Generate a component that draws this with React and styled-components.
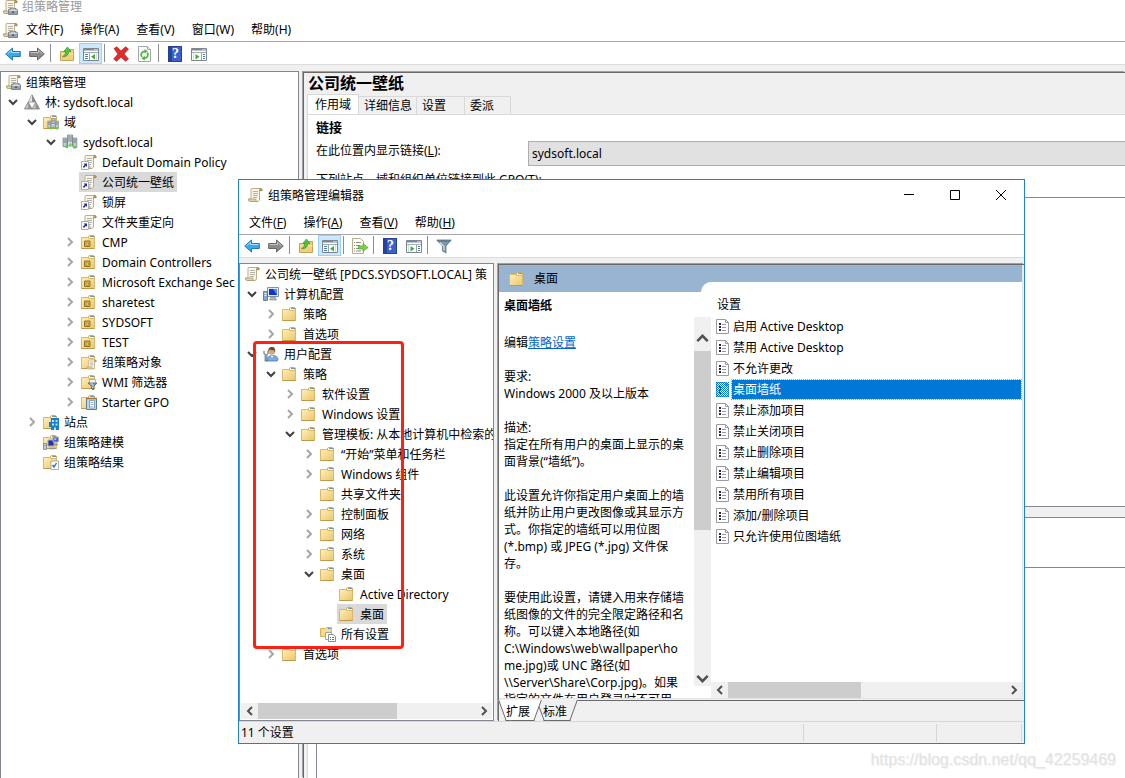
import styled, { createGlobalStyle, css } from "styled-components";

const GlobalStyle = createGlobalStyle`
  * {
    box-sizing: border-box;
  }
  body {
    margin: 0;
    overflow: hidden;
    background: #fff;
    color: #000;
    font-family: "Noto Sans", "Noto Sans CJK SC", sans-serif;
    font-size: 12px;
    line-height: 17px;
  }
  button,
  select {
    font: inherit;
    color: inherit;
  }
  button {
    padding: 0;
    border: 0;
    background: none;
  }
  svg {
    display: block;
    flex: none;
  }
  ul {
    margin: 0;
    padding: 0;
    list-style: none;
  }
`;

/* ---------- icons ---------- */

const Svg = ({ size = 16, children }) => (
  <svg width={size} height={size} viewBox="0 0 16 16" aria-hidden="true">
    {children}
  </svg>
);

const ScrollShape = () => (
  <>
    <path
      d="M4.5 1.5h9c1.2 0 1.8.8 1.6 2h-2.6v8.5c0 1.6-.8 2.5-2 2.5h-7c-1.4 0-2.2-.8-2-2.5h2.5V3c0-.8 0-1.5.5-1.5z"
      fill="#faf5e4"
      stroke="#bcae86"
    />
    <path d="M13 1.5c1.5-.3 2.3.8 2 2.2h-2.4z" fill="#c9a662" stroke="#8c7444" strokeWidth=".6" />
    <path d="M1.6 12h7.2c0 1.4.5 2.3 1.5 2.5H3.5C2 14.5 1.4 13.4 1.6 12z" fill="#e0d3ac" stroke="#a2936a" strokeWidth=".7" />
    <path d="M6 4.500h5M6 6.500h5M6 8.500h5M6 10.500h4" stroke="#b3b1aa" />
  </>
);

const ScrollIcon = () => (
  <Svg>
    <ScrollShape />
  </Svg>
);

const GpmIcon = () => (
  <Svg>
    <ScrollShape />
    <path d="M6.500 11l1.500-1.500h6l1.500 1.500v4.500h-9z" fill="#9aa4ae" stroke="#6b757f" strokeWidth=".8" />
    <path d="M7 11.500h8M9 10.200h4" stroke="#dfe5ea" strokeWidth=".8" />
    <path d="M10 12.500h2v1.500h-2z" fill="#4b545d" />
  </Svg>
);

const GpoLinkIcon = () => (
  <Svg>
    <ScrollShape />
    <path d="M.5 7.500h7v8h-7z" fill="#fff" stroke="#a9aeb5" />
    <path d="M2.500 9.500H6V13l-1.200-1.200L3 14l-1.200-1.200L3.800 10.800z" fill="#1f2f96" />
  </Svg>
);

const FolderShape = () => (
  <>
    <defs>
      <linearGradient id="folderFill" x1="0" y1="0" x2="1" y2="1">
        <stop offset="0" stopColor="#fff0b8" />
        <stop offset="1" stopColor="#eac56c" />
      </linearGradient>
    </defs>
    <path d="M7.500 4V2.200l1-.7h4l1 .7V5" fill="#fdf8e2" stroke="#d0ab58" />
    <path d="M9 2.500h3" stroke="#a9945a" />
    <path d="M11 2.500h2" stroke="#3d9be6" />
    <path d="M.5 3.500h6.300l1 1h5.700v10H.5z" fill="url(#folderFill)" stroke="#dcb864" />
    <path d="M.5 14.500h13" stroke="#bf9848" />
  </>
);

const FolderIcon = () => (
  <Svg>
    <FolderShape />
  </Svg>
);

const OuIcon = () => (
  <Svg>
    <FolderShape />
    <path d="M3.500 7h5.500v5.500H3.500z" fill="#d9b450" stroke="#94731f" />
    <path d="M5 9h2.500v2H5z" fill="#fbe7a2" stroke="#94731f" strokeWidth=".6" />
  </Svg>
);

const Servers = () => (
  <>
    <path d="M1 4h3.800v8.500H1zM11 4h3.800v9.500H11z" fill="#c4ccd3" stroke="#7a858f" strokeWidth=".8" />
    <path d="M5.500 1h5v11h-5z" fill="#d6dde3" stroke="#6d7882" strokeWidth=".8" />
    <path d="M1.500 6h2.800M1.500 8h2.800M11.500 6h2.800M11.500 8h2.800M6 3h4M6 5h4M6 7h4" stroke="#66717b" strokeWidth=".9" />
    <path d="M7.500 9.500h2V11h-2zM3.500 11.500H6V14H3.500zM11.500 12h2.500v2.500h-2.500z" fill="#3fe21d" />
  </>
);

const DomainsIcon = () => (
  <Svg>
    <FolderShape />
    <g transform="translate(4 4) scale(.78)">
      <Servers />
    </g>
  </Svg>
);

const DomainIcon = () => (
  <Svg>
    <Servers />
  </Svg>
);

const ForestIcon = () => (
  <Svg>
    <path d="M8 .8L15.500 15H.5z" fill="#c6c6c6" stroke="#777" strokeWidth=".8" />
    <path d="M8 1L4.300 8H8z" fill="#e4e4e4" />
    <path d="M8 1l3.700 7H8z" fill="#8d8d8d" />
    <path d="M4.300 8h7.400L8 15z" fill="#fafafa" stroke="#777" strokeWidth=".6" />
    <path d="M4.300 8v7H8zM11.700 8l3.600 7h-3.600z" fill="#8f8f8f" />
  </Svg>
);

const GpoFolderIcon = () => (
  <Svg>
    <FolderShape />
    <g transform="translate(5 5) scale(.68)">
      <ScrollShape />
    </g>
  </Svg>
);

const WmiIcon = () => (
  <Svg>
    <FolderShape />
    <path d="M8.500 5.500h6v4h-6z" fill="#f3f0e6" stroke="#a29c88" strokeWidth=".7" />
    <path d="M7 9h9l-3.200 3.500V16l-2.200-1v-2.500z" fill="#6f93ac" stroke="#3f617a" strokeWidth=".7" />
    <path d="M9 10h3v4" stroke="#c7dce9" fill="none" />
  </Svg>
);

const StarterIcon = () => (
  <Svg>
    <FolderShape />
    <path d="M5.500 4.500h10v11h-10z" fill="#bcd6ea" stroke="#5b7f9b" />
    <path d="M5 4.500h11" stroke="#a5713e" strokeWidth="1.500" />
    <path d="M8.500 6.500h5V14h-5z" fill="#fff" stroke="#6f93ac" strokeWidth=".8" />
    <path d="M9.500 8.500h3M9.500 10.500h3M9.500 12.500h2" stroke="#7f9bb1" strokeWidth=".8" />
  </Svg>
);

const SiteIcon = () => (
  <Svg>
    <FolderShape />
    <path d="M8 4h8v12H8v-3H6V8h2z" fill="#1b7cc9" />
    <path d="M9 6h2v2H9zM12.500 6h2v2h-2zM9 9.500h2v2H9zM12.500 9.500h2v2h-2zM11 13.500h2V16h-2z" fill="#b9e2ff" />
  </Svg>
);

const ModelingIcon = () => (
  <Svg>
    <FolderShape />
    <path d="M5 6h6v6H5z" fill="#2130b6" stroke="#a5abb3" />
    <path d="M10 3h5.500v5H10z" fill="#3a5be0" stroke="#b0b6be" />
    <path d="M11 4.500h3l-2 2z" fill="#d6e4ff" />
    <path d="M.5 9.500h3v6h-3z" fill="#c9cdd2" stroke="#7b828a" strokeWidth=".8" />
    <path d="M1.500 11h1v1h-1z" fill="#2cce1b" />
    <path d="M6 14.500h6M11 10.500h4" stroke="#8d939c" strokeWidth="1.500" />
  </Svg>
);

const ResultIcon = () => (
  <Svg>
    <FolderShape />
    <path d="M8 7h7.500v8.500H8z" fill="#fff" stroke="#98a0a8" strokeWidth=".8" />
    <path d="M9.500 11l1.500 2 2.500-4" stroke="#1e6fd0" strokeWidth="1.400" fill="none" />
  </Svg>
);

const AllSettingsIcon = () => (
  <Svg>
    <path d="M.5 2.500h5l1-1h5v9H.5z" fill="#f7dc8c" stroke="#d6b05a" />
    <path d="M8 2.500h2.500" stroke="#3d9be6" />
    <path d="M5.500 6.500h6v7h-6z" fill="#fff" stroke="#a3a3aa" />
    <path d="M8.500 8.500h4.500l2.500 2v5h-7z" fill="#fff" stroke="#8c8c94" />
    <path d="M10 11.500h1m1 0h2M10 13.500h1m1 0h2" stroke="#6d6d80" />
  </Svg>
);

const ComputerIcon = () => (
  <Svg>
    <path d="M4.500 1.500h11v9h-11z" fill="#e3e6ea" stroke="#8a9099" />
    <path d="M6 3h8v6H6z" fill="#1235c4" />
    <path d="M10 3h4v6z" fill="#4e8df0" />
    <path d="M8 11h4l1.500 3h-7z" fill="#b3b8bf" stroke="#7c828a" strokeWidth=".6" />
    <path d="M.5 5.500h4v9h-4z" fill="#86a9c6" stroke="#4c6f8e" strokeWidth=".8" />
    <path d="M1.500 7.500h2M1.500 9.500h2" stroke="#eef5fb" />
  </Svg>
);

const UserIcon = () => (
  <Svg>
    <path d="M4 15c0-4 2-5.500 5.500-5.500S15 11 15 14l-1 1z" fill="#7cabe0" stroke="#4a7ab8" strokeWidth=".8" />
    <circle cx="8.800" cy="5.500" r="3.300" fill="#d9a878" />
    <path d="M5.500 6C4.800 2.500 6.500 1 8.800 1c2.700 0 4 2 3.300 5.500l-1-2.200c-2 .2-3.300 0-4.300-1z" fill="#6a4830" />
    <path d="M7.500 9.700l1.500 2 1.500-2z" fill="#fff" />
    <path d="M1 5v2.500l1.200 1v6.300h1.600V8.500L5 7.500V5" fill="none" stroke="#6d7f91" strokeWidth="1.200" />
  </Svg>
);

const BackIcon = () => (
  <Svg>
    <path d="M.7 8L7.500 2v3.500h7.800v5H7.500V14z" fill="#38a9ea" stroke="#2378b4" />
    <path d="M2.500 7.800L6.500 4.300v2.200h7.800" stroke="#a8e0ff" fill="none" />
  </Svg>
);

const ForwardIcon = () => (
  <Svg>
    <path d="M15.300 8L8.500 2v3.500H.7v5h7.800V14z" fill="#8c8c8c" stroke="#666" />
    <path d="M1.500 6.500h8V4.300L13.500 7.800" stroke="#c4c4c4" fill="none" />
  </Svg>
);

const UpFolderIcon = () => (
  <Svg>
    <path d="M1.500 5.500h7l1-2h5v11h-13z" fill="#f3cf7d" stroke="#c9a455" />
    <path d="M2 8h12.500" stroke="#fbe8b4" />
    <path d="M3.500 10.500C5 10 6.500 8.500 6.700 5.500h-2L8.500 1l3.500 4.500H9.800C9.500 9 7 11.500 3.500 10.500z" fill="#4cc43c" stroke="#2b8f22" strokeWidth=".6" />
  </Svg>
);

const PaneIcon = ({ right }) => (
  <Svg>
    <path d="M.5 2.500h15v12H.5z" fill="#fff" stroke="#7d8794" />
    <path d="M1 3.500h14" stroke="#7d8794" strokeWidth="2" />
    <path d="M11.500 3.500h1m1 0h1" stroke="#fff" />
    <path d="M1 6.500h14" stroke="#a5adb7" />
    {right ? (
      <>
        <path d="M10.500 7v7" stroke="#9aa4b0" />
        <path d="M12 8.500h2M12 10.500h2M12 12.500h2" stroke="#4c7db8" />
        <path d="M4.500 8l4 2.700-4 2.700z" fill="#3fae30" />
        <path d="M2.500 7v7" stroke="#d3d8de" />
      </>
    ) : (
      <>
        <path d="M6.500 7v7" stroke="#9aa4b0" />
        <path d="M2 8.500h3M2 10.500h3M2 12.500h3" stroke="#4c7db8" />
        <path d="M12 8l-4 2.700 4 2.700z" fill="#3fae30" />
        <path d="M13.500 7v7" stroke="#d3d8de" />
      </>
    )}
  </Svg>
);

const DeleteIcon = () => (
  <Svg>
    <path
      d="M1 2.500L4 .8 8 5l4.500-4.200L15.500 3 11 8l4.500 5-3 2.300L8 11l-4.500 4.300L.7 13 5 8z"
      fill="#e22c2c"
      stroke="#b81c1c"
      strokeWidth=".7"
    />
  </Svg>
);

const RefreshIcon = () => (
  <Svg>
    <path d="M1.500.5h9l3 3v12h-12z" fill="#fbfbfb" stroke="#a3a8ae" />
    <path d="M10.500.5v3h3" fill="#e4e8ec" stroke="#a3a8ae" />
    <path d="M4.800 11A3.600 3.600 0 0 1 8 5.300M10.300 6.500a3.600 3.600 0 0 1-3.200 5.700" stroke="#4cb53c" strokeWidth="1.800" fill="none" />
    <path d="M7.500 3l3.300 2.300-3.300 2.300zM7.800 9.800L4.500 12.200l3.300 2.200z" fill="#4cb53c" />
  </Svg>
);

const HelpMark = styled.span`
  width: 14px;
  height: 16px;
  background: linear-gradient(90deg, #2743a0 3px, #3a62cc 3px);
  border: 1px solid #2a3f90;
  color: #fff;
  font: bold 14px/14px "Liberation Serif", serif;
  text-align: center;
  padding-left: 2px;
`;

const ExportIcon = () => (
  <Svg>
    <path d="M.5.5h8l3 3v12H.5z" fill="#fffdf2" stroke="#b5ad8e" />
    <path d="M2 4.500h1m1 0h5M2 7.500h1m1 0h4M2 10.500h1m1 0h3M2 13h1m1 0h5" stroke="#8b8b92" />
    <path d="M6.500 8H11V5.500l5 4-5 4V11H6.500z" fill="#7ed04c" stroke="#55a530" strokeWidth=".7" />
  </Svg>
);

const FilterIcon = () => (
  <Svg>
    <path d="M.8 2h14.400L10 8v7l-3.500-2V8z" fill="#7b97a8" stroke="#5a7687" strokeWidth=".8" />
    <path d="M1.500 3h13" stroke="#5a788a" strokeWidth="1.500" />
    <path d="M4 4.500l4 4v4" stroke="#d4e3ec" fill="none" strokeWidth="1.200" />
  </Svg>
);

const SettingIcon = ({ selected }) => (
  <svg width="13" height="15" viewBox="0 0 13 15" aria-hidden="true">
    <path d="M.5.5h9l3 3v11H.5z" fill="#fff" stroke={selected ? "#5aa5e4" : "#9a9aa2"} />
    <path d="M9.500.5v3h3" fill="none" stroke={selected ? "#5aa5e4" : "#9a9aa2"} />
    <path d="M3 5h2M3 8h2M3 11h2" stroke="#26263c" strokeWidth="2" />
    <path d="M6 5.500h4M6 8.500h4M6 11.500h4" stroke={selected ? "#c9dcf2" : "#9a94b4"} />
    {selected && (
      <>
        <defs>
          <pattern id="dither" width="2" height="2" patternUnits="userSpaceOnUse">
            <path d="M0 0h1v1H0zM1 1h1v1H1z" fill="#0078d7" />
          </pattern>
        </defs>
        <path d="M0 0h13v15H0z" fill="url(#dither)" />
      </>
    )}
  </svg>
);

const chevrons = {
  down: "M1 3l4 4 4-4",
  up: "M1 7l4-4 4 4",
  right: "M3 1l4 4-4 4",
  left: "M7 1L3 5l4 4",
};

const Chevron = ({ to, color = "#505050", size = 10 }) => (
  <svg width={size} height={size} viewBox="0 0 10 10" aria-hidden="true">
    <path d={chevrons[to]} fill="none" stroke={color} strokeWidth="2" />
  </svg>
);

/* ---------- shared parts ---------- */

const Screen = styled.div`
  position: relative;
  display: flex;
  flex-direction: column;
  height: 100vh;
  overflow: hidden;
`;

const MainTitle = styled.header`
  display: flex;
  align-items: flex-end;
  gap: 4px;
  height: 15px;
  padding-left: 2px;
  color: #999;
`;

const MenuBar = styled.nav`
  display: flex;
  align-items: center;
  height: ${({ $height }) => $height}px;
  padding: ${({ $drop = 0 }) => $drop}px 0 0 2px;
  border-bottom: 1px solid #a5a7ab;
`;

const MenuButton = styled.button`
  padding: 0 9px 0 8px;
`;

const ToolBar = styled.div`
  display: flex;
  align-items: ${({ $low }) => ($low ? "flex-end" : "flex-start")};
  height: 23px;
  border-bottom: 1px solid #dcdcdc;
`;

const ToolButton = styled.button`
  display: flex;
  align-items: center;
  justify-content: center;
  width: 23px;
  height: 21px;
  margin-left: 1px;
  ${({ $active }) =>
    $active &&
    css`
      background: #cce8ff;
      border: 1px solid #99d1ff;
    `}
`;

const ToolDivider = styled.span`
  width: 1px;
  height: 18px;
  margin: 1px 3px 2px 2px;
  background: #8d8d8d;
`;

const TreePane = styled.div`
  position: relative;
  display: flex;
  flex-direction: column;
  width: ${({ $width }) => $width}px;
  flex: none;
  background: #fff;
  border: 1px solid #828790;
  ${({ $open }) => $open && "border-bottom: 0;"}
  overflow: hidden;
`;

const TreeRow = styled.li`
  display: flex;
  align-items: center;
  height: 20px;
  padding-left: ${({ $level }) => 2 + 19 * Math.max($level - 1, 0)}px;
  white-space: nowrap;
`;

const Toggle = styled.button`
  display: flex;
  justify-content: center;
  width: 19px;
  flex: none;
`;

const ToggleSpace = styled.span`
  width: 19px;
  flex: none;
`;

const TreeLabel = styled.span`
  display: flex;
  align-items: center;
  gap: 5px;
  height: 20px;
  padding: 0 3px 0 2px;
  background: ${({ $selected }) => ($selected ? "#d9d9d9" : "none")};
`;

const Sunken = styled.section`
  display: flex;
  flex-direction: column;
  flex: 1;
  min-width: 0;
  margin: 1px 0 0 4px;
  border-top: 1px solid #696969;
  border-left: 1px solid #696969;
  box-shadow: -1px -1px 0 #a0a0a0;
`;

const ScrollBar = styled.div`
  display: flex;
  flex: none;
  flex-direction: ${({ $vertical }) => ($vertical ? "column" : "row")};
  ${({ $vertical }) => ($vertical ? "width: 17px;" : "height: 16px;")}
  background: #f0f0f0;
`;

const ScrollButton = styled.button`
  display: flex;
  align-items: center;
  justify-content: center;
  flex: none;
  width: 17px;
  height: 16px;
  ${({ $tall }) =>
    $tall &&
    css`
      height: 34px;
      padding-top: 8px;
    `}
`;

const ScrollTrack = styled.div`
  display: flex;
  flex-direction: inherit;
  flex: 1;
`;

const ScrollThumb = styled.div`
  flex: 0 0 ${({ $size }) => $size}%;
  background: #cdcdcd;
`;

const HScroll = ({ size }) => (
  <ScrollBar>
    <ScrollButton aria-label="left">
      <Chevron to="left" />
    </ScrollButton>
    <ScrollTrack>
      <ScrollThumb $size={size} />
    </ScrollTrack>
    <ScrollButton aria-label="right">
      <Chevron to="right" />
    </ScrollButton>
  </ScrollBar>
);

const Tree = ({ nodes }) => (
  <ul>
    {nodes.map(([level, Icon, text, open, selected], i) => (
      <TreeRow key={i} $level={level}>
        {level > 0 &&
          (open === undefined ? (
            <ToggleSpace />
          ) : (
            <Toggle aria-label={text}>
              <Chevron to={open ? "down" : "right"} color={open ? "#404040" : "#a6a6a6"} />
            </Toggle>
          ))}
        <TreeLabel $selected={selected}>
          <Icon />
          {text}
        </TreeLabel>
      </TreeRow>
    ))}
  </ul>
);

const Tools = ({ items, low }) => (
  <ToolBar $low={low}>
    {items.map((item, i) =>
      item ? (
        <ToolButton key={i} aria-label={item[0]} $active={item[2]}>
          {item[1]}
        </ToolButton>
      ) : (
        <ToolDivider key={i} />
      )
    )}
  </ToolBar>
);

/* ---------- data ---------- */

const domainTree = [
  [0, GpmIcon, "组策略管理"],
  [1, ForestIcon, "林: sydsoft.local", true],
  [2, DomainsIcon, "域", true],
  [3, DomainIcon, "sydsoft.local", true],
  [4, GpoLinkIcon, "Default Domain Policy"],
  [4, GpoLinkIcon, "公司统一壁纸", undefined, true],
  [4, GpoLinkIcon, "锁屏"],
  [4, GpoLinkIcon, "文件夹重定向"],
  [4, OuIcon, "CMP", false],
  [4, OuIcon, "Domain Controllers", false],
  [4, OuIcon, "Microsoft Exchange Sec", false],
  [4, OuIcon, "sharetest", false],
  [4, OuIcon, "SYDSOFT", false],
  [4, OuIcon, "TEST", false],
  [4, GpoFolderIcon, "组策略对象", false],
  [4, WmiIcon, "WMI 筛选器", false],
  [4, StarterIcon, "Starter GPO", false],
  [2, SiteIcon, "站点", false],
  [2, ModelingIcon, "组策略建模"],
  [2, ResultIcon, "组策略结果"],
];

const policyTree = [
  [0, ScrollIcon, "公司统一壁纸 [PDCS.SYDSOFT.LOCAL] 策"],
  [1, ComputerIcon, "计算机配置", true],
  [2, FolderIcon, "策略", false],
  [2, FolderIcon, "首选项", false],
  [1, UserIcon, "用户配置", true],
  [2, FolderIcon, "策略", true],
  [3, FolderIcon, "软件设置", false],
  [3, FolderIcon, "Windows 设置", false],
  [3, FolderIcon, "管理模板: 从本地计算机中检索的", true],
  [4, FolderIcon, "“开始”菜单和任务栏", false],
  [4, FolderIcon, "Windows 组件", false],
  [4, FolderIcon, "共享文件夹"],
  [4, FolderIcon, "控制面板", false],
  [4, FolderIcon, "网络", false],
  [4, FolderIcon, "系统", false],
  [4, FolderIcon, "桌面", true],
  [5, FolderIcon, "Active Directory"],
  [5, FolderIcon, "桌面", undefined, true],
  [4, AllSettingsIcon, "所有设置"],
  [2, FolderIcon, "首选项", false],
];

const settings = [
  "启用 Active Desktop",
  "禁用 Active Desktop",
  "不允许更改",
  "桌面墙纸",
  "禁止添加项目",
  "禁止关闭项目",
  "禁止删除项目",
  "禁止编辑项目",
  "禁用所有项目",
  "添加/删除项目",
  "只允许使用位图墙纸",
];

const description = `要求:
Windows 2000 及以上版本

描述:
指定在所有用户的桌面上显示的桌
面背景(“墙纸”)。

此设置允许你指定用户桌面上的墙
纸并防止用户更改图像或其显示方
式。你指定的墙纸可以用位图
(*.bmp) 或 JPEG (*.jpg) 文件保
存。

要使用此设置，请键入用来存储墙
纸图像的文件的完全限定路径和名
称。可以键入本地路径(如
C:\\Windows\\web\\wallpaper\\ho
me.jpg)或 UNC 路径(如
\\\\Server\\Share\\Corp.jpg)。如果
指定的文件在用户登录时不可用，`;

const mainTools = [
  ["后退", <BackIcon />],
  ["前进", <ForwardIcon />],
  null,
  ["向上", <UpFolderIcon />],
  ["控制台树", <PaneIcon />, true],
  null,
  ["删除", <DeleteIcon />],
  ["刷新", <RefreshIcon />],
  null,
  ["帮助", <HelpMark>?</HelpMark>],
  ["操作窗格", <PaneIcon right />],
];

const editorTools = [
  ["后退", <BackIcon />],
  ["前进", <ForwardIcon />],
  null,
  ["向上", <UpFolderIcon />],
  ["控制台树", <PaneIcon />, true],
  null,
  ["导出列表", <ExportIcon />],
  null,
  ["帮助", <HelpMark>?</HelpMark>],
  ["操作窗格", <PaneIcon right />],
  null,
  ["筛选器", <FilterIcon />],
];

/* ---------- management console ---------- */

const MainBody = styled.main`
  display: flex;
  flex: 1;
  min-height: 0;
  padding-top: 6px;
  background: #f0f0f0;
`;

const GpoTitle = styled.h1`
  margin: 0;
  padding-left: 4px;
  font-size: 16px;
  line-height: 21px;
`;

const ScopeTabs = styled.div`
  display: flex;
  align-items: flex-end;
  height: 20px;
  padding-left: 3px;
`;

const ScopeTab = styled.button`
  width: ${({ $width }) => $width}px;
  height: 18px;
  padding-left: 5px;
  text-align: left;
  border: 1px solid #d9d9d9;
  border-left: 0;
  border-bottom: 0;
  ${({ $active }) =>
    $active &&
    css`
      height: 20px;
      padding-left: 7px;
      background: #fff;
      border-left: 1px solid #d9d9d9;
    `}
`;

const ScopePage = styled.div`
  display: flex;
  flex-direction: column;
  flex: 1;
  min-height: 0;
  margin-left: 3px;
  padding: 3px 0 0 8px;
  background: #fff;
  border-top: 1px solid #d9d9d9;
  border-left: 1px solid #d9d9d9;
`;

const ScopeHeading = styled.h2`
  margin: 0;
  font-size: 13px;
  line-height: 18px;
`;

const LinkRow = styled.div`
  display: flex;
  padding-top: 5px;
`;

const LinkLabel = styled.label`
  width: 212px;
  padding-top: 1px;
`;

const LinkSelect = styled.select`
  appearance: none;
  flex: 1;
  height: 25px;
  padding: 0 3px;
  background: #e1e1e1;
  border: 1px solid #adadad;
  border-right: 0;
  border-radius: 0;
`;

const ListCaption = styled.p`
  margin: 0;
  padding: 5px 0 9px;
`;

const SiteList = styled.div`
  height: 310px;
  flex: none;
  border: 1px solid #828790;
  border-right: 0;
`;

const Splitter = styled.div`
  height: 10px;
  flex: none;
  background: #f0f0f0;
`;

const FilterList = styled.div`
  flex: 1;
  border: 1px solid #828790;
  border-right: 0;
  border-bottom: 0;
`;

const ListHead = styled.div`
  height: 50px;
  border-bottom: 1px solid #828790;
`;

const Watermark = styled.div`
  position: absolute;
  right: 9px;
  bottom: 8px;
  color: #e2e2e2;
  font-family: "Liberation Sans", sans-serif;
  font-size: 16px;
  line-height: 20px;
  text-shadow: 1px 1px 0 #f4f4f4;
`;

/* ---------- editor window ---------- */

const EditorWindow = styled.div`
  position: absolute;
  left: 238px;
  top: 179px;
  display: flex;
  flex-direction: column;
  width: 787px;
  height: 565px;
  background: #fff;
  border: 1px solid #1883d7;
`;

const EditorTitle = styled.header`
  display: flex;
  align-items: center;
  gap: 5px;
  height: 30px;
  padding-left: 8px;
`;

const WindowButtons = styled.div`
  display: flex;
  margin-left: auto;
`;

const WindowButton = styled.button`
  display: flex;
  align-items: center;
  justify-content: center;
  width: 46px;
  height: 30px;
`;

const EditorBody = styled.div`
  display: flex;
  flex: 1;
  min-height: 0;
  padding-top: 5px;
  background: #f0f0f0;
`;

const TreeArea = styled.div`
  flex: 1;
  min-height: 0;
`;

const TreeScroll = styled.div`
  padding: 0 1px 1px;
`;

const RedFrame = styled.div`
  position: absolute;
  left: 13px;
  top: 77px;
  width: 151px;
  height: 308px;
  border: 3px solid #ff2014;
  border-radius: 4px;
`;

const View = styled.div`
  display: flex;
  flex-direction: column;
  flex: 1;
  min-height: 0;
  margin-right: 1px;
  background: #fff;
  border-right: 1px solid #e3e3e3;
  border-bottom: 1px solid #e3e3e3;
`;

const Banner = styled.div`
  display: flex;
  flex: none;
  height: 27px;
  background: #99b4d1;
`;

const BannerTitle = styled.div`
  display: flex;
  align-items: center;
  gap: 9px;
  width: 202px;
  padding-left: 10px;
`;

const BannerCorner = styled.div`
  flex: 1;
  margin-top: 17px;
  background: #fff;
  border-top-left-radius: 10px;
`;

const Columns = styled.div`
  display: flex;
  flex: 1;
  min-height: 0;
`;

const DescriptionColumn = styled.div`
  display: flex;
  flex-direction: column;
  width: 212px;
`;

const DescriptionTitle = styled.h3`
  height: 25px;
  margin: 0;
  padding: 5px 0 0 5px;
  flex: none;
  font-size: 12px;
`;

const DescriptionScroll = styled.div`
  display: flex;
  flex: 1;
  min-height: 0;
`;

const DescriptionText = styled.div`
  flex: 1;
  padding: 17px 0 0 5px;
  overflow: hidden;
  white-space: pre;
`;

const EditLine = styled.p`
  margin: 0 0 17px;
  a {
    color: #0066cc;
  }
`;

const VerticalHolder = styled.div`
  display: flex;
  padding-bottom: 12px;
`;

const SettingColumn = styled.div`
  display: flex;
  flex-direction: column;
  flex: 1;
  min-width: 0;
`;

const ColumnHead = styled.div`
  height: 24px;
  padding: 4px 0 0 6px;
`;

const SettingList = styled.ul`
  flex: 1;
  padding-left: 5px;
`;

const SettingRow = styled.li`
  display: flex;
  align-items: center;
  gap: 2px;
  height: 21px;
`;

const SettingName = styled.button`
  flex: 1;
  height: 21px;
  padding: 0 1px;
  border: 1px solid transparent;
  text-align: left;
  ${({ $selected }) =>
    $selected &&
    css`
      color: #fff;
      background: #0078d7 padding-box;
      border: 1px dotted #ff8728;
    `}
`;

const ViewTabs = styled.div`
  display: flex;
  height: 21px;
  flex: none;
  margin-top: 1px;
  border-top: 1px solid #696969;
`;

const ViewTab = styled.button`
  position: relative;
  width: ${({ $active }) => ($active ? 38 : 36)}px;
  height: 20px;
  z-index: ${({ $active }) => ($active ? 1 : 0)};
  span {
    position: relative;
    z-index: 1;
  }
  &::before,
  &::after {
    content: "";
    position: absolute;
    top: -1px;
    width: 60%;
    height: 20px;
    background: ${({ $active }) => ($active ? "#fff" : "#f0f0f0")};
    border-bottom: 1px solid #696969;
  }
  &::before {
    left: 3px;
    border-left: 1px solid #696969;
    transform: skewX(20deg);
  }
  &::after {
    right: -1px;
    border-right: 1px solid #696969;
    transform: skewX(-20deg);
  }
`;

const StatusBar = styled.footer`
  display: flex;
  height: 22px;
  padding-top: 2px;
  background: #f0f0f0;
  border-top: 1px solid #d7d7d7;
`;

const StatusCell = styled.div`
  ${({ $width }) => ($width ? `width: ${$width}px;` : "flex: 1;")}
  height: 18px;
  padding-left: 2px;
  border-right: 1px solid #d7d7d7;
`;

const StatusGrip = styled.div`
  width: 2px;
`;

const Editor = () => (
  <EditorWindow>
    <EditorTitle>
      <ScrollIcon />
      组策略管理编辑器
      <WindowButtons>
        <WindowButton aria-label="最小化">
          <svg width="10" height="10">
            <path d="M0 4.500h10" stroke="#000" />
          </svg>
        </WindowButton>
        <WindowButton aria-label="最大化">
          <svg width="10" height="10">
            <path d="M.5.5h9v9h-9z" fill="none" stroke="#000" />
          </svg>
        </WindowButton>
        <WindowButton aria-label="关闭">
          <svg width="10" height="10">
            <path d="M0 0l10 10M10 0L0 10" stroke="#000" />
          </svg>
        </WindowButton>
      </WindowButtons>
    </EditorTitle>
    <MenuBar $height={25}>
      {[
        ["文件", "F"],
        ["操作", "A"],
        ["查看", "V"],
        ["帮助", "H"],
      ].map(([name, key]) => (
        <MenuButton key={key}>
          {name}(<u>{key}</u>)
        </MenuButton>
      ))}
    </MenuBar>
    <Tools items={editorTools} />
    <EditorBody>
      <TreePane $width={255}>
        <TreeArea>
          <Tree nodes={policyTree} />
        </TreeArea>
        <TreeScroll>
          <HScroll size={64} />
        </TreeScroll>
        <RedFrame />
      </TreePane>
      <Sunken>
        <View>
          <Banner>
            <BannerTitle>
              <FolderIcon />
              桌面
            </BannerTitle>
            <BannerCorner />
          </Banner>
          <Columns>
            <DescriptionColumn>
              <DescriptionTitle>桌面墙纸</DescriptionTitle>
              <DescriptionScroll>
                <DescriptionText>
                  <EditLine>
                    编辑<a href="#policy">策略设置</a>
                  </EditLine>
                  {description}
                </DescriptionText>
                <VerticalHolder>
                  <ScrollBar $vertical>
                    <ScrollButton $tall aria-label="up">
                      <Chevron to="up" size={13} />
                    </ScrollButton>
                    <ScrollTrack>
                      <ScrollThumb $size={56} />
                    </ScrollTrack>
                    <ScrollButton aria-label="down">
                      <Chevron to="down" size={13} />
                    </ScrollButton>
                  </ScrollBar>
                </VerticalHolder>
              </DescriptionScroll>
            </DescriptionColumn>
            <SettingColumn>
              <ColumnHead>设置</ColumnHead>
              <SettingList>
                {settings.map((name, i) => (
                  <SettingRow key={name}>
                    <SettingIcon selected={i === 3} />
                    <SettingName $selected={i === 3}>{name}</SettingName>
                  </SettingRow>
                ))}
              </SettingList>
              <HScroll size={48} />
            </SettingColumn>
          </Columns>
        </View>
        <ViewTabs>
          <ViewTab $active>
            <span>扩展</span>
          </ViewTab>
          <ViewTab>
            <span>标准</span>
          </ViewTab>
        </ViewTabs>
      </Sunken>
    </EditorBody>
    <StatusBar>
      <StatusCell>11 个设置</StatusCell>
      <StatusCell $width={133} />
      <StatusCell $width={85} />
      <StatusGrip />
    </StatusBar>
  </EditorWindow>
);

export default function App() {
  return (
    <Screen>
      <GlobalStyle />
      <MainTitle>
        <GpmIcon />
        组策略管理
      </MainTitle>
      <MenuBar $height={27} $drop={3}>
        <GpmIcon />
        {["文件(F)", "操作(A)", "查看(V)", "窗口(W)", "帮助(H)"].map((name) => (
          <MenuButton key={name}>{name}</MenuButton>
        ))}
      </MenuBar>
      <Tools items={mainTools} low />
      <MainBody>
        <TreePane $width={299} $open>
          <Tree nodes={domainTree} />
        </TreePane>
        <Sunken>
          <GpoTitle>公司统一壁纸</GpoTitle>
          <ScopeTabs>
            <ScopeTab $active $width={52}>
              作用域
            </ScopeTab>
            <ScopeTab $width={58}>详细信息</ScopeTab>
            <ScopeTab $width={48}>设置</ScopeTab>
            <ScopeTab $width={46}>委派</ScopeTab>
          </ScopeTabs>
          <ScopePage>
            <ScopeHeading>链接</ScopeHeading>
            <LinkRow>
              <LinkLabel htmlFor="location">
                在此位置内显示链接(<u>L</u>):
              </LinkLabel>
              <LinkSelect id="location">
                <option>sydsoft.local</option>
              </LinkSelect>
            </LinkRow>
            <ListCaption>
              下列站点、域和组织单位链接到此 GPO(<u>T</u>):
            </ListCaption>
            <SiteList />
            <Splitter />
            <FilterList>
              <ListHead />
            </FilterList>
          </ScopePage>
        </Sunken>
      </MainBody>
      <Watermark>https://blog.csdn.net/qq_42259469</Watermark>
      <Editor />
    </Screen>
  );
}
